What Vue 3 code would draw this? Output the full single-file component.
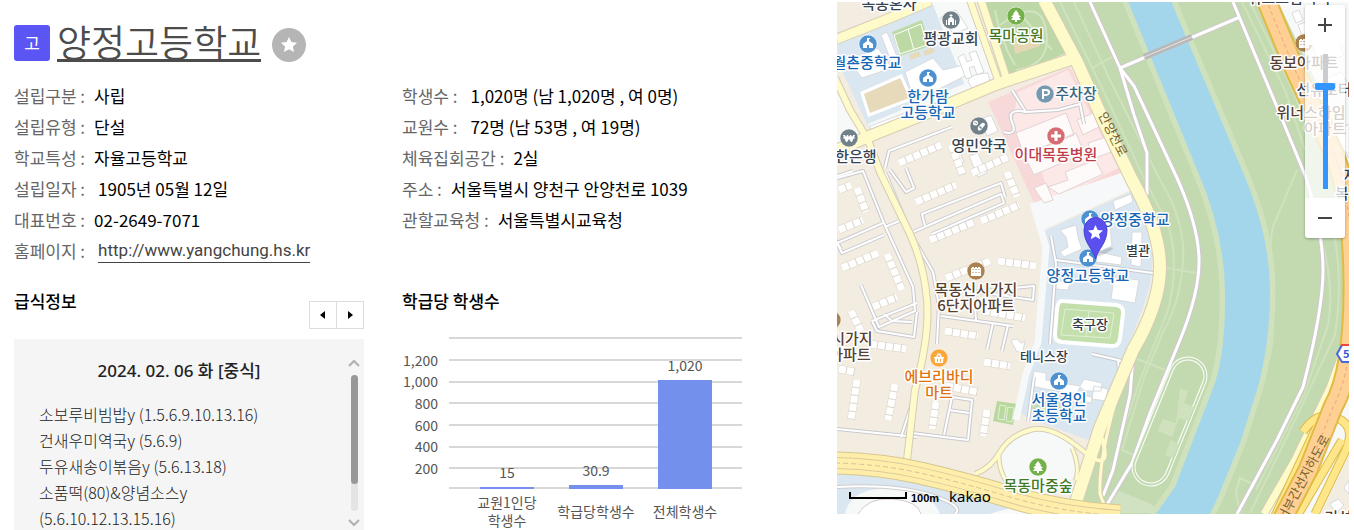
<template>
  <main class="page">
    <section class="info">
      <header class="title">
        <span class="badge">고</span>
        <h1><a href="#">양정고등학교</a></h1>
        <button class="favorite" type="button" aria-label="관심학교">
          <svg viewBox="0 0 34 34" width="34" height="34">
            <path d="M17 9l2.4 5 5.6.7-4.100 3.800 1.100 5.500-5-2.700-5 2.700 1.100-5.500L9 14.700l5.600-.7z" fill="#fff" />
          </svg>
        </button>
      </header>

      <dl v-for="(list, i) in details" :key="i" class="details">
        <div v-for="item in list" :key="item.label" class="detail">
          <dt>{{ item.label }} :</dt>
          <dd :class="{ indent: item.indent }">
            <a v-if="item.link" href="#" class="homepage">{{ item.value }}</a>
            <template v-else>{{ item.value }}</template>
          </dd>
        </div>
      </dl>

      <section class="meals">
        <div class="meals-head">
          <h2>급식정보</h2>
          <div class="pager">
            <button type="button" aria-label="이전">
              <svg viewBox="0 0 6 10" width="6" height="10"><path d="M5 1v8L0 5z" /></svg>
            </button>
            <button type="button" aria-label="다음">
              <svg viewBox="0 0 6 10" width="6" height="10"><path d="M1 1v8l5-4z" /></svg>
            </button>
          </div>
        </div>
        <div class="meal-box">
          <div class="meal-text">
            <h3>2024. 02. 06 화 [중식]</h3>
            <p v-for="meal in meals" :key="meal">{{ meal }}</p>
          </div>
          <div class="scroll" aria-hidden="true">
            <svg viewBox="0 0 12 8" width="12" height="8"><path d="M1 7l5-5 5 5" /></svg>
            <div class="track"><div class="thumb"></div></div>
            <svg viewBox="0 0 12 8" width="12" height="8"><path d="M1 1l5 5 5-5" /></svg>
          </div>
        </div>
      </section>

      <section class="students">
        <h2>학급당 학생수</h2>
        <svg class="chart" viewBox="402 330 340 200">
          <path v-for="y in gridLines" :key="y" :d="`M449 ${y}h293`" stroke="#d8d8d8" stroke-width="2" />
          <text v-for="t in ticks" :key="t.label" x="438" :y="t.y" text-anchor="end">{{ t.label }}</text>
          <g v-for="bar in bars" :key="bar.value">
            <rect :x="bar.x - 27" :y="489 - bar.h" width="54" :height="bar.h" fill="#7391ec" />
            <text :x="bar.x" :y="bar.valueY" text-anchor="middle">{{ bar.value }}</text>
            <text v-for="(line, i) in bar.name" :key="line" :x="bar.x" :y="bar.nameY + i * 18" text-anchor="middle">{{ line }}</text>
          </g>
        </svg>
      </section>
    </section>

    <section class="map">
      <svg class="canvas" viewBox="837 2 512 512" preserveAspectRatio="xMidYMid slice">
        <rect x="837" y="2" width="512" height="512" fill="#f3ece1" />

        <!-- riverside park -->
        <path d="M1045 2L1092 97 1132 180 1154 225 1160 267 1150 310 1133 350 1105 413 1075 500 1072 514H1349V2z" fill="#c3dab0" />
        <g fill="none" stroke="#cfe2bd" stroke-width="2">
          <path d="M1060 2L1104 92 1140 170 1168 225Q1180 262 1168 310L1140 380 1110 470" />
          <path d="M1074 2L1110 80 1160 180Q1186 222 1183 262T1164 330L1144 378 1122 450" />
          <path d="M1092 68l22-12M1167 268l30 5M1137 359l28 11M1122 450l12 5" />
          <path d="M1242 2L1285 90 1305 150M1250 2L1295 95 1303 118M1297 170L1274 224Q1268 240 1272 300T1262 370L1238 460" />
          <path d="M1320 235q15 50 8 90l-24 70-48 95M1332 225q12 50 3 110l-35 75-50 103" />
          <path d="M1240 478l12 6-12 30-4-22z" />
        </g>
        <path d="M1119 491l30 12 14 10h-60z" fill="#d1e2c3" />

        <!-- river -->
        <path :d="river" fill="#a3d6eb" stroke="#cfe2bd" stroke-width="11" />
        <path :d="river" fill="#a3d6eb" />

        <!-- blocks -->
        <path d="M837 42L930 4 968 4 998 83 930 112 872 135 837 60z" fill="#dae7f1" />
        <path d="M932 2h38l28 80-30 11-18-45zM837 80l30 57-30 10z" fill="#f7f8f8" />
        <path d="M868 124l120-50 8 8-122 54z" fill="#f7f8f8" />
        <path d="M985 2h54l27 51-58 25z" fill="#bdd8a6" />
        <path d="M988 102l82-35 56 103-86 46z" fill="#f8d9d9" />
        <path d="M1018 92l50-22 50 98-70 36q-6-60-36-76z" fill="#fce8e6" />
        <path d="M1030 204l97-33 8 17-92 42z" fill="#f7f8f9" />
        <path d="M1044 231l90-41 16 40q8 40-8 80l-40 106-14 24-60-22-14-10 14-37 8-40z" fill="#dae7f1" />
        <path d="M1014 7l38 43M1000 25q40-30 46 5t-30 40M995 10q5 30 20 55" fill="none" stroke="#d2e4c3" stroke-width="2" />
        <path d="M1013 42l25-8 2 12-25 8z" fill="#e4d7b4" />

        <!-- school grounds -->
        <path d="M862 93l39-17 10 23-42 16z" fill="#e6dabb" stroke="#fff" stroke-width="3" />
        <path d="M892 32l30-12 8 26-30 10z" fill="#bddaa4" />
        <path d="M894 35l27-11 6 21-27 9zM908 29l6 21" fill="none" stroke="#fff" />
        <path d="M909 55l10-4 2 5-10 4zM923 51l10-4 2 5-10 4z" fill="#e6dabb" />
        <path d="M1063 301l53 4q8 1 7 9l-3 24q-1 9-9 8l-49-4q-8-1-7-9l2-24q1-9 6-8z" fill="#c3dfac" stroke="#fff" stroke-width="4" />
        <path d="M1065 309l49 4-4 25-49-3zM1089 311l-3 26" fill="none" stroke="#e1f0d6" />
        <circle cx="1088" cy="324" r="6" fill="none" stroke="#e1f0d6" />
        <path d="M997 401l20 3-4 21-20-4z" fill="#b9d89e" />
        <path d="M1000 405l6 1-2 14-6-1zM1008 407l6 1-2 14-6-1z" fill="none" stroke="#e1f0d6" />
        <path d="M1030 400q20-12 40 4l-3 14q-18 4-36-6z" fill="#c8dfb8" />

        <!-- buildings -->
        <g fill="#fff" stroke="#d9dadd">
          <path d="M848 60l30-12 14 20-30 10zM881 35l6-3 14 34-7 3zM905 72l28-14 10 12 20-5 4 10-40 20-16-4z" />
          <path d="M958 57l6-3 3 8 5-2-3-7 7-2 8 21-7 3-3-9-5 2 3 9-6 2zM968 82q0-8 20-9l2 8-18 7zM940 18l16-8 12 18-14 6zM870 126l38-14 2 6-38 13z" />
          <path d="M1060 230l16-5 2 12 4 12-18 8-4-5 8-5-2-10zM1113 201l18-7 2 8-18 8zM1132 232l10 0-1 35-10-2zM1090 250l32 7-1 8-32-4zM1100 220l10 6 2 20-14 6zM1114 277l25 3-4 23-24-4zM1056 280l14 3-2 7-12-1z" />
          <path d="M1034 371l12 2 0 7 34 6 4-7 18 4-1 8-16 0-5-4-4 8-45-9zM1094 386l14 3-2 12-14-2zM1073 393l19 4-1 6-18-3zM969 156l9-3 9 20-9 4zM952 153l7-3 5 12-7 3zM981 119l10-4 7 16-11 5z" />
          <path d="M1011 341q6-4 8 0t6 0l-2 10-6 1z" />
        </g>
        <g fill="#fefafa" stroke="#e3d3d3">
          <path d="M1016 133l50-20 8 22-50 20zM1024 155l52-22 8 20-50 22zM1077 120l16-7 6 14-16 8zM1088 143l18-6 5 15-18 7zM1034 188l12-5 7 17-9 3zM1048 187l20-7-3-8 30-12 8 14-44 20z" />
        </g>

        <g fill="none">
          <path v-for="d in blocks" :key="d" :d="d" stroke="#dcd5cb" stroke-width="8" />
          <path v-for="d in blocks" :key="d" :d="d" stroke="#fff" stroke-width="7" stroke-dasharray="7 1" />
        </g>

        <!-- inner lanes -->
        <g fill="none" stroke-linejoin="round">
          <path v-for="d in lanes" :key="d" :d="d" stroke="#c9cacf" stroke-width="4" />
          <path v-for="d in lanes" :key="d" :d="d" stroke="#fff" stroke-width="2" />
        </g>
        <path d="M1033 203l13 44-8 95-12 32-10 46" fill="none" stroke="#f7f8f9" stroke-width="7" />

        <!-- park paths -->
        <g fill="none" stroke-linejoin="round">
          <path v-for="d in paths" :key="d" :d="d" stroke="#cfc8cf" stroke-width="5" />
          <path v-for="d in paths" :key="d" :d="d" stroke="#fff" stroke-width="3" />
          <path d="M1144 57l48-20" stroke="#b8b8b8" stroke-width="6" />
          <path d="M1144 57l48-20" stroke="#e6e6e6" stroke-width="1" />
        </g>

        <!-- running track -->
        <g stroke-linecap="round">
          <path d="M1188 376l-37 91" stroke="#fff" stroke-width="39" />
          <path d="M1188 376l-37 91" stroke="#c3dab0" stroke-width="37" />
          <path d="M1188 376l-37 91" stroke="#fff" stroke-width="33" />
          <path d="M1188 376l-37 91" stroke="#c3dab0" stroke-width="31" />
        </g>
        <path d="M1180 388l8 3-4 12 9 4-5 14-9-3-8 22 8 4-6 14-8-3 7-18-14-6 5-12 13 4z" fill="#cfe2bd" />

        <!-- south blocks -->
        <path d="M837 470q90 8 150 26 40 12 90 18H837z" fill="#dae7f1" />
        <path d="M845 514q5-26 45-26t50 26z" fill="#f7f8f8" />
        <path d="M858 514q10-17 35-15t28 15" fill="#fff" stroke="#d6c9c5" />
        <path d="M990 514q40-14 85-6v6z" fill="#fafafa" />
        <path d="M837 487q60-3 94 8t24 19" fill="none" stroke="#cdcdd0" stroke-width="4" />
        <path d="M837 487q60-3 94 8t24 19" fill="none" stroke="#fff" stroke-width="2" />
        <ellipse cx="1038" cy="462" rx="40" ry="32" fill="#f7f8f8" />

        <!-- east blocks -->
        <path d="M1278 2h71v162l-22-60z" fill="#f7f8f8" />
        <path d="M1335 400l14-30v144h-80l30-60z" fill="#f7f8f8" />
        <path d="M1349 455l-28 59h28z" fill="#f3ece1" />
        <g fill="#fff" stroke="#d9dadd">
          <path d="M1292 13l7-3 4 10-7 3zM1298 25l7-3 4 10-7 3zM1312 45l24-10 8 20-24 10zM1322 80l20-8 7 15-20 8zM1334 132l15-8v34zM1344 488l5-8v14zM1330 504l8-5 6 6-8 8z" />
        </g>

        <!-- yellow streets -->
        <g fill="none" stroke-linecap="butt" stroke-linejoin="round">
          <path v-for="r in streets" :key="r.d" :d="r.d" stroke="#d5cdb5" :stroke-width="r.w + 2" />
          <path v-for="r in streets" :key="r.d" :d="r.d" stroke="#fefac9" :stroke-width="r.w" />
        </g>

        <!-- motorways -->
        <g fill="none">
          <path :d="southRoad" stroke="#d5c78f" stroke-width="23" />
          <path :d="southRoad" stroke="#ffeeaa" stroke-width="21" />
          <path :d="southRoad" stroke="#d8cb9d" stroke-width="12" />
          <path :d="southRoad" stroke="#ffeeaa" stroke-width="10" />
          <path :d="southRoad" stroke="#cfc39a" stroke-width="1" stroke-dasharray="5 3" />
          <path v-for="d in ramps" :key="d" :d="d" stroke="#d9bb4c" stroke-width="9" />
          <path v-for="d in ramps" :key="d" :d="d" stroke="#ffe789" stroke-width="7" />
          <path :d="highway" stroke="#e0ba42" stroke-width="21" />
          <path :d="highway" stroke="#ffd093" stroke-width="17" />
          <path :d="highway" stroke="#eda57e" stroke-width="1" stroke-dasharray="4 3" />
        </g>
        <path d="M1342 345h10v17h-10l-5-8z" fill="#fff" stroke="#4868dd" stroke-width="2" />
        <path d="M1341 345h8" stroke="#f04444" stroke-width="2" />
        <text x="1343" y="358" class="route">5</text>

        <g class="road-label">
          <text transform="translate(1098 115) rotate(63)">안양천로</text>
          <text transform="translate(1330 438) rotate(-62)" text-anchor="end">서부간선지하도로</text>
        </g>

        <!-- places -->
        <g v-for="(pin, i) in pins" :key="i" :transform="`translate(${pin.x} ${pin.y})`">
          <circle r="9" :fill="pinColors[pin.type]" stroke="#fff" stroke-opacity=".5" />
          <path :d="glyphs[pin.type]" fill="#fff" fill-rule="evenodd" />
        </g>
        <text
          v-for="(label, i) in labels"
          :key="i"
          :x="label.x"
          :y="label.y"
          :class="['label', label.kind]"
          text-anchor="middle"
        >{{ label.text }}</text>

        <!-- selected school -->
        <ellipse cx="1104" cy="252" rx="10" ry="2" fill="#000" opacity=".15" transform="rotate(-25 1104 252)" />
        <path d="M1095.500 259C1093 249 1084 243 1084 230a11.500 12.500 0 0 1 23 0C1107 243 1098 249 1095.500 259z" fill="#5b50ee" stroke="#4a42cf" />
        <path d="M1095.500 225l2.200 5 5.300.5-4 3.500 1.200 5.300-4.700-2.800-4.700 2.800 1.200-5.300-4-3.500 5.300-.5z" fill="#fff" />

        <path d="M850 492v6h56v-6" fill="none" stroke="#000" stroke-width="2" />
        <text x="911" y="502" class="scale">100m</text>
        <text x="949" y="502" class="brand">kakao</text>
      </svg>

      <div class="zoom">
        <button type="button" aria-label="확대">
          <svg viewBox="0 0 16 16" width="16" height="16"><path d="M8 1v14M1 8h14" /></svg>
        </button>
        <div class="zoom-level">
          <input v-model="level" type="range" min="0" max="100" aria-label="지도 확대 수준" />
        </div>
        <button type="button" aria-label="축소">
          <svg viewBox="0 0 16 16" width="16" height="16"><path d="M1 8h14" /></svg>
        </button>
      </div>
    </section>
  </main>
</template>

<script setup>
import { ref } from 'vue'

const level = ref(77)

const details = [
  [
    { label: '설립구분', value: '사립' },
    { label: '설립유형', value: '단설' },
    { label: '학교특성', value: '자율고등학교' },
    { label: '설립일자', value: '1905년 05월 12일', indent: true },
    { label: '대표번호', value: '02-2649-7071' },
    { label: '홈페이지', value: 'http://www.yangchung.hs.kr', link: true, indent: true }
  ],
  [
    { label: '학생수', value: '1,020명 (남 1,020명 , 여 0명)', indent: true },
    { label: '교원수', value: '72명 (남 53명 , 여 19명)', indent: true },
    { label: '체육집회공간', value: '2실' },
    { label: '주소', value: '서울특별시 양천구 안양천로 1039' },
    { label: '관할교육청', value: '서울특별시교육청' }
  ]
]

const meals = [
  '소보루비빔밥y (1.5.6.9.10.13.16)',
  '건새우미역국y (5.6.9)',
  '두유새송이볶음y (5.6.13.18)',
  '소품떡(80)&양념소스y',
  '(5.6.10.12.13.15.16)'
]

const gridLines = [338, 360, 382, 403, 425, 447, 468, 488]
const ticks = [
  { label: '1,200', y: 366 },
  { label: '1,000', y: 387 },
  { label: '800', y: 409 },
  { label: '600', y: 431 },
  { label: '400', y: 452 },
  { label: '200', y: 474 }
]
const bars = [
  { x: 507, h: 2, value: '15', valueY: 478, name: ['교원1인당', '학생수'], nameY: 508 },
  { x: 596, h: 4, value: '30.9', valueY: 476, name: ['학급당학생수'], nameY: 517 },
  { x: 685, h: 109, value: '1,020', valueY: 371, name: ['전체학생수'], nameY: 517 }
]

const river = 'M1125 -6L1198 172Q1224 232 1225 290T1215 383L1175 487 1150 522H1206L1218 497 1240 443 1257 390Q1270 345 1270 290T1242 170L1168 -6z'

const blocks = [
  'M899 163l42-18', 'M916 202l40-17', 'M972 173l36-16', 'M981 221l38-16', 'M930 240l44-18',
  'M951 145l12 30', 'M1007 172l10 25', 'M857 188l9 24', 'M839 230l24-10', 'M842 268l36-15',
  'M887 254l15 36', 'M873 307l24-10', 'M851 311l10 20', 'M946 278l44-17', 'M998 261l38 5',
  'M945 331l33 5', 'M983 311l42 7', 'M870 344l36 5', 'M839 190l12-5', 'M839 369l16 3',
  'M857 380l-6 40', 'M895 384l-7 36', 'M936 402l-4 27', 'M987 410l-4 26', 'M984 362l26 4',
  'M946 386l32 6'
]

const lanes = [
  'M837 178l26-7 20 50 30 66 2 24-36 16-18-42', 'M837 243l46-20M841 249l-6-10M837 243l5 10 42-18',
  'M885 172l26 62 22 38 6 34-2 38', 'M913 232l88-38 3 9-72 31M925 226l-3-12 79-31 4 14',
  'M885 227l14-6M872 321l45-18M872 321l5 10 37 6 3-25M884 314l8 7 20 1',
  'M890 170l16 22 8-4-8-20', 'M941 316l72 10M976 320l-2-28 60-6-1 14-54-8M993 323l-6 27M1008 325l-6 26',
  'M837 429l80 8M901 437l18-55M912 433l56 7 4-40-20-3-8 38M949 410l20 3',
  'M885 168l4-17 63-24', 'M1012 90l14 22 32-2 22-6 4 20M1026 112q-20-4-14 10t-8 10',
  'M1051 236l5 28-6 80M1056 260l97 13M1034 377l-6 45', 'M1092 354l26 6 2 22M1118 360l14 6',
  'M837 176l16-5', 'M1310 70l39-16M1318 100l31-13M1340 112l9 25', 'M1349 460l-24 54'
]

const paths = [
  'M1090 2L1120 68 1134 86 1177 178Q1198 225 1199 258T1180 340L1150 413 1132 463 1105 508',
  'M1120 68L1134 115 1147 153V195',
  'M1120 68L1240 17',
  'M1233 2L1277 107 1305 175Q1323 230 1323 270T1303 387L1277 440 1237 514',
  'M1133 358L1130 395 1113 470 1103 496'
]

const streets = [
  { d: 'M837 39L890 18 930 1', w: 9 },
  { d: 'M970 0L977 20 998 80', w: 6 },
  { d: 'M981 0L1007 80', w: 7 },
  { d: 'M837 150L870 136 930 112 997 84 1078 57', w: 11 },
  { d: 'M835 78L850 110 868 140 880 172 910 234Q924 265 927 300T915 390L907 460', w: 6 },
  { d: 'M1044 0L1077 62 1104 122 1132 180Q1160 230 1160 267T1133 350L1100 428 1075 505', w: 12 },
  { d: 'M975 474q16-6 25-22t30-22 52 20 20-12', w: 4 },
  { d: 'M999 452q-2 36 38 52M1072 448q8 18 4 32', w: 3 },
  { d: 'M1128 362Q1098 450 1100 494l6 16', w: 3 },
  { d: 'M1344 350L1330 388 1295 460 1264 514', w: 7 }
]

const southRoad = 'M835 463Q880 464 920 473T1010 497 1120 516'
const highway = 'M1263 -8L1295 70 1330 145Q1352 190 1353 280T1333 407L1308 470 1282 520'
const ramps = [
  'M1303 432q14-22 34-14t8 34L1315 514',
  'M1318 424L1274 518',
  'M1342 440l-46 78'
]

const pinColors = {
  school: '#4d91d0',
  tree: '#75b14b',
  church: '#71818a',
  bank: '#71818a',
  drug: '#71818a',
  parking: '#7599ae',
  hospital: '#d66d75',
  apt: '#a98250',
  mart: '#f9a63b'
}

const glyphs = {
  school: 'M0-6h2v1H1v2l4 3v4H1V1h-2v3h-4V0l4-3v-3z',
  tree: 'M0-6l3 4H2l3 3H3l2 3H1v2h-2V4h-4l2-3h-2l3-3h-1z',
  church: 'M-.5-6h1v1h1v1h-1v1L3-1v6H1V2h-2v3h-2v-6l2.500-2v-1h-1v-1h1zM-5 0h1v5h-1zM4 0h1v5H4z',
  bank: 'M-6-3h2l1 2 1-2h1l1 2 1-2h1l1 2 1-2h2L5-.500h1v1H4.500L3 4H2L0 1-2 4h-1L-4.500.500H-6v-1h1z',
  drug: 'M-6-3a2.500 2.500 0 0 1 5 0 2.500 2.500 0 0 1-5 0zM-5-3.500l3 1.500v-1l-3-1zM-1 1L3-3q3-1 3 2L2 4q-4 2-3-3zM0 1l2 2 1-1-2-2z',
  parking: 'M-3-5H1q4 0 4 3.300T1 2h-2v3h-2zM-1-3v3h2q2 0 2-1.500T1-3z',
  hospital: 'M-1.500-5h3v3.500H5v3H1.500V5h-3V1.500H-5v-3h3.500z',
  apt: 'M-5-3h1v-1h2v1h1v-1h2v1h1v-1h2v1h1v8H-5zM-3.500-2v1h1v-1zM-.5-2v1h1v-1zM2.500-2v1h1v-1zM-3.500 1v1h1V1zM-.5 1v1h1V1zM2.500 1v1h1V1z',
  mart: 'M-5-1h2l2-4 1 1-1 3h2L0-4l1-1 2 4h2v1H4.500L4 5h-8l-.500-5H-5zM-2 1v3h1V1zM1 1v3h1V1z'
}

const pins = [
  { type: 'church', x: 951, y: 20 },
  { type: 'tree', x: 1016, y: 16 },
  { type: 'school', x: 868, y: 44 },
  { type: 'school', x: 928, y: 78 },
  { type: 'parking', x: 1045, y: 94 },
  { type: 'drug', x: 979, y: 126 },
  { type: 'hospital', x: 1056, y: 136 },
  { type: 'bank', x: 849, y: 138 },
  { type: 'school', x: 1090, y: 219 },
  { type: 'school', x: 1088, y: 258 },
  { type: 'apt', x: 976, y: 271 },
  { type: 'mart', x: 939, y: 358 },
  { type: 'school', x: 1059, y: 381 },
  { type: 'tree', x: 1038, y: 467 },
  { type: 'apt', x: 1304, y: 43 },
  { type: 'apt', x: 832, y: 320 }
]

const labels = [
  { text: '목동혼사', x: 889, y: 9, kind: 'dark' },
  { text: '평광교회', x: 951, y: 44, kind: 'dark' },
  { text: '목마공원', x: 1016, y: 41, kind: 'green' },
  { text: '월촌중학교', x: 867, y: 68, kind: 'blue' },
  { text: '한가람', x: 928, y: 102, kind: 'blue' },
  { text: '고등학교', x: 928, y: 118, kind: 'blue' },
  { text: '주차장', x: 1076, y: 99, kind: 'teal' },
  { text: '영민약국', x: 979, y: 151, kind: 'dark' },
  { text: '이대목동병원', x: 1056, y: 160, kind: 'red' },
  { text: '신한은행', x: 849, y: 162, kind: 'dark' },
  { text: '동보아파트', x: 1304, y: 68, kind: 'brown' },
  { text: '선유로터', x: 1324, y: 95, kind: 'dark' },
  { text: '위너스하임', x: 1311, y: 118, kind: 'brown' },
  { text: '아파트', x: 1325, y: 134, kind: 'brown' },
  { text: '지', x: 1350, y: 181, kind: 'dark' },
  { text: '복', x: 1342, y: 199, kind: 'dark' },
  { text: '양정중학교', x: 1135, y: 225, kind: 'blue' },
  { text: '별관', x: 1138, y: 255, kind: 'small' },
  { text: '양정고등학교', x: 1088, y: 281, kind: 'blue' },
  { text: '목동신시가지', x: 976, y: 295, kind: 'brown' },
  { text: '6단지아파트', x: 976, y: 311, kind: 'brown' },
  { text: '축구장', x: 1090, y: 329, kind: 'small' },
  { text: '신시가지', x: 845, y: 344, kind: 'brown' },
  { text: '아파트', x: 850, y: 360, kind: 'brown' },
  { text: '테니스장', x: 1044, y: 361, kind: 'small' },
  { text: '에브리바디', x: 939, y: 382, kind: 'orange' },
  { text: '마트', x: 939, y: 398, kind: 'orange' },
  { text: '서울경인', x: 1059, y: 405, kind: 'blue' },
  { text: '초등학교', x: 1059, y: 421, kind: 'blue' },
  { text: '목동마중숲', x: 1038, y: 491, kind: 'green' },
  { text: '위브드림시티', x: 1289, y: 3, kind: 'dark' },
  { text: '기성빌', x: 1345, y: 523, kind: 'brown' }
]
</script>

<style>
body {
  overflow: hidden;
  background: #fff;
}
</style>

<style scoped>
.page {
  display: grid;
  grid-template-columns: minmax(0, 823fr) minmax(0, 512fr);
  height: 100vh;
  padding: 2px 5px 0 14px;
  box-sizing: border-box;
  overflow: hidden;
  font-family: 'Noto Sans CJK KR', 'Noto Sans', sans-serif;
  font-size: 17px;
  color: #000;
}

a {
  color: inherit;
  text-decoration: none;
}

button {
  display: flex;
  align-items: center;
  justify-content: center;
  padding: 0;
  border: 0;
  cursor: pointer;
}

h1,
h2,
h3,
p,
dl,
dd {
  margin: 0;
}

.info {
  display: grid;
  grid-template-columns: minmax(0, 350fr) minmax(0, 340fr);
  grid-template-rows: auto auto auto;
  align-content: start;
  column-gap: 38px;
  padding-right: 95px;
}

.title {
  grid-column: 1 / -1;
  display: flex;
  align-items: center;
  height: 78px;
}

.badge {
  width: 36px;
  height: 36px;
  margin-top: 4px;
  border-radius: 3px;
  background: #5b55f4;
  color: #fff;
  font-size: 17px;
  line-height: 36px;
  text-align: center;
}

.title h1 {
  height: 36px;
  margin: 2px 11px 0 7px;
  border-bottom: 3px solid #4c4c4c;
  color: #4c4c4c;
  font-size: 37px;
  font-weight: 350;
  line-height: 36px;
}

.favorite {
  width: 34px;
  height: 34px;
  margin-top: 8px;
  border-radius: 50%;
  background: #b5b5b5;
}

.details {
  height: 186px;
}

.detail {
  display: flex;
  height: 31px;
  line-height: 31px;
  white-space: nowrap;
}

.detail dt {
  color: #666;
}

.detail dd {
  margin-left: 9px;
}

.detail dd.indent {
  margin-left: 13px;
}

.homepage {
  display: block;
  height: 27px;
  border-bottom: 1px solid #444;
  color: #444;
  font-family: Roboto, sans-serif;
}

h2 {
  font-size: 17px;
  font-weight: 500;
  line-height: 25px;
}

.meals,
.students {
  padding-top: 22px;
}

.meals-head {
  display: flex;
  justify-content: space-between;
  height: 51px;
}

.pager {
  display: flex;
  height: 28px;
  margin-top: 13px;
}

.pager button {
  width: 28px;
  border: 1px solid #ddd;
  background: #fff;
}

.pager button + button {
  margin-left: -1px;
}

.meal-box {
  display: flex;
  height: 200px;
  background: #f5f5f5;
  color: #222;
}

.meal-text {
  flex: 1;
  padding: 17px 0 0 25px;
  overflow: hidden;
  white-space: nowrap;
}

.meal-text h3 {
  margin: 0 0 15px -25px;
  font-family: 'Noto Sans', 'Noto Sans CJK KR', sans-serif;
  font-size: 17px;
  font-weight: 500;
  line-height: 30px;
  text-align: center;
}

.meal-text p {
  font-size: 16px;
  font-weight: 300;
  line-height: 26px;
}

.scroll {
  display: flex;
  flex-direction: column;
  align-items: center;
  gap: 8px;
  width: 12px;
  margin: 20px 4px 0;
}

.scroll svg {
  fill: none;
  stroke: #b0b0b0;
  stroke-width: 2;
}

.track {
  width: 7px;
  height: 136px;
  border-radius: 4px;
  background: #e4e4e4;
}

.thumb {
  height: 80%;
  border-radius: 4px;
  background: #989898;
}

.chart {
  display: block;
  width: 100%;
  margin-top: 17px;
  fill: #555;
  font-size: 14px;
}

.map {
  position: relative;
  height: 512px;
  overflow: hidden;
}

.canvas {
  display: block;
  width: 100%;
  height: 100%;
}

.label {
  font-size: 15px;
  font-weight: 500;
  stroke: #fff;
  stroke-width: 3px;
  stroke-linejoin: round;
  paint-order: stroke;
}

.small {
  fill: #343d48;
  font-size: 13px;
}

.dark {
  fill: #374450;
}

.brown {
  fill: #58402f;
}

.blue {
  fill: #1767b5;
}

.teal {
  fill: #376781;
}

.green {
  fill: #427b27;
}

.red {
  fill: #bd3d4b;
}

.orange {
  fill: #e1730f;
}

.road-label {
  fill: #75642f;
  font-size: 13px;
  font-weight: 400;
}

.route {
  fill: #3758d8;
  font-size: 11px;
  font-weight: 700;
}

.scale {
  font-family: 'Liberation Sans', sans-serif;
  font-size: 11px;
  font-weight: 700;
}

.brand {
  font-family: 'Noto Sans', sans-serif;
  font-size: 15px;
}

.zoom {
  position: absolute;
  top: 3px;
  right: 4px;
  width: 40px;
  border-radius: 3px;
  box-shadow: 0 1px 3px rgba(0, 0, 0, 0.3);
  overflow: hidden;
}

.zoom button {
  width: 40px;
  height: 40px;
  background: #fff;
}

.zoom button svg {
  fill: none;
  stroke: #444;
  stroke-width: 2;
}

.zoom-level {
  display: flex;
  justify-content: center;
  padding: 9px 0;
  background: rgba(255, 255, 255, 0.75);
}

.zoom-level input {
  appearance: none;
  writing-mode: vertical-lr;
  direction: rtl;
  width: 20px;
  height: 135px;
  margin: 0;
  background: linear-gradient(#ccc 32px, #3396ff 32px) center / 5px 100% no-repeat;
}

.zoom-level input::-webkit-slider-thumb {
  appearance: none;
  width: 20px;
  height: 7px;
  border-radius: 2px;
  background: #3396ff;
}
</style>
